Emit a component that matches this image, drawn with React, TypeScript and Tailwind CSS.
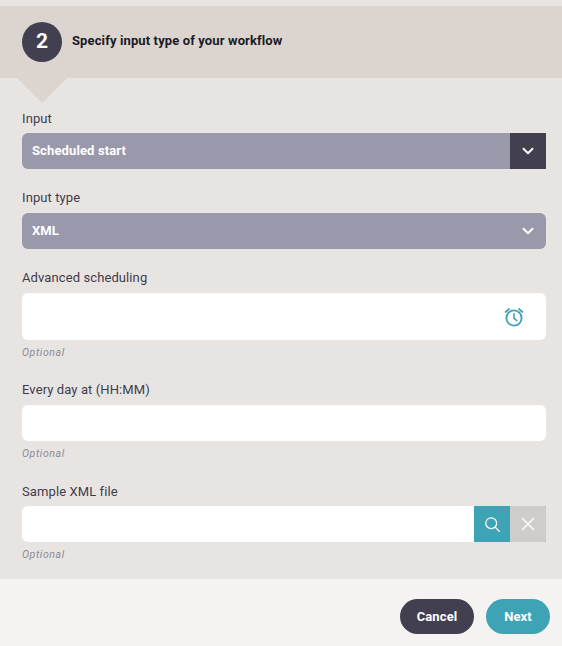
import { ChevronDown, X } from "lucide-react";

function Label({ children }: { children: React.ReactNode }) {
  return <div className="h-[20px] text-[13px] leading-[20px] text-[#3f3c4d] tracking-[0.1px]">{children}</div>;
}
function Optional() {
  return <div className="mt-[5px] h-[16px] text-[10.5px] leading-[16px] italic text-[#8d8a97] tracking-[0.6px]">Optional</div>;
}

export default function App() {
  return (
    <div className="w-[562px] h-[646px] flex flex-col bg-[#e8e4e1] font-['Roboto',sans-serif] overflow-hidden">
      <div className="mt-[6px] h-[72px] shrink-0 bg-[#dbd4cf] flex items-center gap-[10px] pl-[22px] relative">
        <div className="w-[40px] h-[40px] rounded-full bg-[#423f50] text-white flex items-center justify-center text-[21px] font-bold">2</div>
        <div className="mb-[2px] text-[13px] font-bold text-[#1c1b26] tracking-[0.12px]">Specify input type of your workflow</div>
        <div className="absolute left-[17px] top-[72px] w-0 h-0 border-l-[25px] border-r-[25px] border-t-[25px] border-l-transparent border-r-transparent border-t-[#dbd4cf]" />
      </div>
      <div className="flex-1 pl-[22px] pr-[16px] pt-[31px]">
        <Label>Input</Label>
        <div className="mt-[4px] h-[36px] rounded-l-[6px] bg-[#9a98ab] flex items-center overflow-hidden">
          <div className="flex-1 pl-[10px] text-[13px] font-bold text-white tracking-[0.12px]">Scheduled start</div>
          <div className="w-[36px] h-[36px] bg-[#423f50] flex items-center justify-center">
            <ChevronDown size={18} strokeWidth={2.6} color="#fff" />
          </div>
        </div>

        <div className="mt-[19px]"><Label>Input type</Label></div>
        <div className="mt-[5px] h-[36px] rounded-[6px] bg-[#9a98ab] flex items-center">
          <div className="flex-1 pl-[10px] text-[13px] font-bold text-white tracking-[0.12px]">XML</div>
          <div className="w-[36px] flex justify-center">
            <ChevronDown size={18} strokeWidth={2.6} color="#fff" />
          </div>
        </div>

        <div className="mt-[19px]"><Label>Advanced scheduling</Label></div>
        <div className="mt-[5px] h-[47px] rounded-[6px] bg-white flex items-center justify-end pr-[22px]">
          <svg width="20" height="20" viewBox="0 0 20 20" fill="none" stroke="#3fa3b6" strokeWidth="1.9" strokeLinecap="round" strokeLinejoin="round">
            <circle cx="10" cy="11" r="7.6" />
            <path d="M10 6.8V11.2L12.8 13.6" strokeWidth="1.6" />
            <path d="M1.6 5 5 2" strokeWidth="1.7" />
            <path d="M18.4 5 15 2" strokeWidth="1.7" />
          </svg>
        </div>
        <Optional />

        <div className="mt-[19px]"><Label>Every day at (HH:MM)</Label></div>
        <div className="mt-[5px] h-[36px] rounded-[6px] bg-white" />
        <Optional />

        <div className="mt-[20px]"><Label>Sample XML file</Label></div>
        <div className="mt-[4px] h-[36px] flex">
          <div className="flex-1 bg-white rounded-l-[6px]" />
          <div className="w-[36px] bg-[#3fa3b6] flex items-center justify-center">
            <svg width="15" height="15" viewBox="0 0 15 15" fill="none" stroke="#fff" strokeWidth="1.25" strokeLinecap="round">
              <circle cx="6.2" cy="6.2" r="5.4" />
              <path d="M10.2 10.2 14.4 14.4" />
            </svg>
          </div>
          <div className="w-[36px] bg-[#b3b1af]">
            <div className="w-full h-full rounded-r-[3px] bg-[#cfcdcb] flex items-center justify-center">
              <X size={22} strokeWidth={1.5} color="#fff" />
            </div>
          </div>
        </div>
        <Optional />
      </div>
      <div className="h-[67px] shrink-0 bg-[#f4f3f1] flex items-start justify-end gap-[12px] pr-[12px] pt-[20px]">
        <button className="w-[74px] h-[35px] rounded-full bg-[#423f50] text-white text-[13px] font-bold tracking-[0.12px]">Cancel</button>
        <button className="w-[64px] h-[35px] rounded-full bg-[#3fa3b6] text-white text-[13px] font-bold tracking-[0.12px]">Next</button>
      </div>
    </div>
  );
}
